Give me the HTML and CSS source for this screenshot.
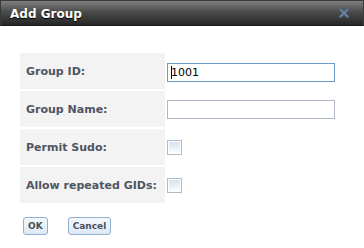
FILE: index.html
```html
<!DOCTYPE html>
<html>
<head>
<meta charset="utf-8">
<link rel="stylesheet" href="styles.css">
</head>
<body>
<div class="dialog">
  <div class="titlebar">
    <span class="title">Add Group</span>
    <svg class="close" width="10" height="10" viewBox="0 0 10 10">
      <path d="M1.5 1.5 L8.5 8.5 M8.5 1.5 L1.5 8.5" stroke="#45546a" stroke-width="3.6" stroke-linecap="square"/>
      <path d="M1.5 1.5 L8.5 8.5 M8.5 1.5 L1.5 8.5" stroke="#6a83a2" stroke-width="1.8" stroke-linecap="square"/>
    </svg>
  </div>
  <div class="body">
    <table class="form">
      <tr>
        <th>Group ID:</th>
        <td><span class="field"><input class="text focus" type="text" value="1001"><span class="caret"></span></span></td>
      </tr>
      <tr>
        <th>Group Name:</th>
        <td><input class="text" type="text"></td>
      </tr>
      <tr>
        <th>Permit Sudo:</th>
        <td><span class="check"></span></td>
      </tr>
      <tr>
        <th>Allow repeated GIDs:</th>
        <td><span class="check"></span></td>
      </tr>
    </table>
    <div class="buttons">
      <button class="btn">OK</button>
      <button class="btn">Cancel</button>
    </div>
  </div>
</div>
</body>
</html>
```
FILE: styles.css
```css
html, body {
  margin: 0;
  padding: 0;
  background: #fff;
}
.dialog {
  width: 364px;
  height: 248px;
  box-sizing: border-box;
  font-family: "DejaVu Sans", Verdana, sans-serif;
}
.titlebar {
  height: 26px;
  box-sizing: border-box;
  border: 1px solid #3a3a3a;
  border-bottom: 1px solid #1a1a1a;
  background: linear-gradient(to bottom, #7e7e7e 0%, #4c4c4c 45%, #262626 100%);
  display: flex;
  align-items: center;
  justify-content: space-between;
  padding: 0 14px 0 9px;
}
.title {
  color: #fff;
  font-weight: bold;
  font-size: 12px;
  text-shadow: 0 1px 1px #000;
  padding-top: 1px;
}
.close {
  display: block;
}
.body {
  padding: 25px 0 0 18px;
}
.form {
  border-collapse: separate;
  border-spacing: 2px;
}
.form th {
  background: #f3f3f3;
  width: 139px;
  height: 36px;
  padding: 0 0 0 6px;
  text-align: left;
  font-size: 11px;
  font-weight: bold;
  color: #4e5563;
  white-space: nowrap;
}
.form td {
  padding: 0;
  vertical-align: middle;
}
.field {
  position: relative;
  display: inline-block;
}
.text {
  display: block;
  width: 168px;
  height: 19px;
  box-sizing: border-box;
  border: 1px solid #b0b7c6;
  margin: 0;
  padding: 0 3px;
  font-family: "DejaVu Sans", sans-serif;
  font-size: 11px;
  color: #000;
  background: #fff;
  outline: none;
}
.text.focus {
  border-color: #6a9bc8;
}
.caret {
  position: absolute;
  left: 4px;
  top: 3px;
  width: 1px;
  height: 13px;
  background: #000;
}
.check {
  display: block;
  width: 15px;
  height: 15px;
  box-sizing: border-box;
  border: 1px solid #b3b9c7;
  background: linear-gradient(to bottom, #d2e2f0 0%, #e6eff7 50%, #ffffff 100%);
  box-shadow: inset 0 0 0 1px #fff;
}
.buttons {
  display: flex;
  gap: 20px;
  padding: 12px 0 0 5px;
}
.btn {
  height: 18px;
  min-width: 22px;
  box-sizing: border-box;
  margin: 0;
  padding: 0 4px;
  border: 1px solid #8fb0d2;
  border-radius: 3px;
  background: linear-gradient(to bottom, #f4f8fc 0%, #dde9f5 100%);
  font-family: "DejaVu Sans", sans-serif;
  font-size: 9px;
  font-weight: bold;
  color: #4a4f5a;
  line-height: 16px;
}
```
